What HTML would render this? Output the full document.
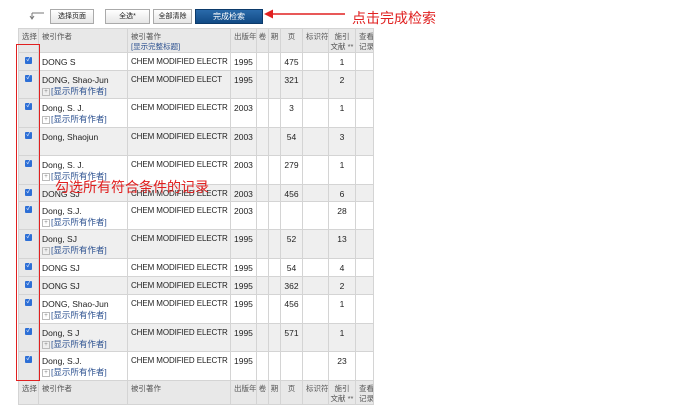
<html><head><style>
body{margin:0;width:700px;height:402px;background:#fff;font-family:"Liberation Sans","Noto Sans CJK SC",sans-serif;position:relative;overflow:hidden}
.btn{position:absolute;top:9px;height:13px;border:1px solid #aaa;background:linear-gradient(#fff,#e6e6e6);font-size:7px;text-align:center;line-height:13px;color:#222}
table{position:absolute;left:18px;top:28px;width:355px;border-collapse:collapse;font-size:8.5px;line-height:10px;color:#222;table-layout:fixed}
td{border:1px solid #d4d4d4;vertical-align:top;padding:4px 2px 0 3px;overflow:hidden;white-space:nowrap}
tr.h td{background:#e8e8e8;color:#555;font-size:7.5px;height:23px;padding-top:3px}
tr.g td{background:#efefef}
tr.w td{background:#fff}
td.c{text-align:center;padding-left:1px;padding-right:1px}
td.t{font-size:8px;letter-spacing:-0.1px}
td.s{background:#e8e8e8!important;text-align:center;padding:4px 0 0 0}
.sub{color:#2a4f8f;font-size:8.5px;margin-top:1px}
.sub b{display:inline-block;width:6px;height:6px;border:1px solid #bbb;font-size:6px;line-height:6px;color:#888;font-weight:normal;text-align:center;margin-right:1px;vertical-align:middle}
.cb{display:inline-block;width:7px;height:7px;background:#2d6fd6;border-radius:1px;color:#fff;font-size:6px;line-height:7px}
a{color:#2a4f8f;text-decoration:none}
</style></head><body>
<svg style="position:absolute;left:28px;top:10px" width="18" height="10"><path d="M4 3H16M4 3V8M2 6L4 9L6 6" stroke="#777" fill="none"/></svg>
<div class="btn" style="left:50px;width:42px">选择页面</div>
<div class="btn" style="left:105px;width:43px">全选*</div>
<div class="btn" style="left:153px;width:37px">全部清除</div>
<div class="btn" style="left:195px;width:66px;background:linear-gradient(#2a6aaa,#114a85);color:#fff;border-color:#0c3a6a;font-size:8px">完成检索</div>
<svg style="position:absolute;left:255px;top:6px" width="95" height="16"><path d="M90 8H16" stroke="#e02020" stroke-width="1.5"/><path d="M9 8L18 3.5V12.5Z" fill="#e02020"/></svg>
<div style="position:absolute;left:352px;top:8px;color:#e02020;font-size:14px">点击完成检索</div>
<table>
<colgroup><col style="width:20px"><col style="width:89px"><col style="width:103px"><col style="width:26px"><col style="width:12px"><col style="width:12px"><col style="width:22px"><col style="width:26px"><col style="width:27px"><col style="width:18px"></colgroup>
<tr class="h"><td>选择</td><td>被引作者</td><td>被引著作<br><a>[显示完整标题]</a></td><td>出版年</td><td class="c">卷</td><td class="c">期</td><td class="c">页</td><td>标识符</td><td class="c">施引<br>文献 **</td><td>查看<br>记录</td></tr>
<tr class="w" style="height:18px"><td class="s"><span class="cb">✓</span></td><td>DONG S</td><td class="t">CHEM MODIFIED ELECTR</td><td>1995</td><td></td><td></td><td class="c">475</td><td></td><td class="c">1</td><td></td></tr>
<tr class="g" style="height:28px"><td class="s"><span class="cb">✓</span></td><td>DONG, Shao-Jun<div class="sub"><b>+</b>[显示所有作者]</div></td><td class="t">CHEM MODIFIED ELECT</td><td>1995</td><td></td><td></td><td class="c">321</td><td></td><td class="c">2</td><td></td></tr>
<tr class="w" style="height:29px"><td class="s"><span class="cb">✓</span></td><td>Dong, S. J.<div class="sub"><b>+</b>[显示所有作者]</div></td><td class="t">CHEM MODIFIED ELECTR</td><td>2003</td><td></td><td></td><td class="c">3</td><td></td><td class="c">1</td><td></td></tr>
<tr class="g" style="height:28px"><td class="s"><span class="cb">✓</span></td><td>Dong, Shaojun</td><td class="t">CHEM MODIFIED ELECTR</td><td>2003</td><td></td><td></td><td class="c">54</td><td></td><td class="c">3</td><td></td></tr>
<tr class="w" style="height:29px"><td class="s"><span class="cb">✓</span></td><td>Dong, S. J.<div class="sub"><b>+</b>[显示所有作者]</div></td><td class="t">CHEM MODIFIED ELECTR</td><td>2003</td><td></td><td></td><td class="c">279</td><td></td><td class="c">1</td><td></td></tr>
<tr class="g" style="height:17px"><td class="s"><span class="cb">✓</span></td><td>DONG SJ</td><td class="t">CHEM MODIFIED ELECTR</td><td>2003</td><td></td><td></td><td class="c">456</td><td></td><td class="c">6</td><td></td></tr>
<tr class="w" style="height:28px"><td class="s"><span class="cb">✓</span></td><td>Dong, S.J.<div class="sub"><b>+</b>[显示所有作者]</div></td><td class="t">CHEM MODIFIED ELECTR</td><td>2003</td><td></td><td></td><td class="c"></td><td></td><td class="c">28</td><td></td></tr>
<tr class="g" style="height:29px"><td class="s"><span class="cb">✓</span></td><td>Dong, SJ<div class="sub"><b>+</b>[显示所有作者]</div></td><td class="t">CHEM MODIFIED ELECTR</td><td>1995</td><td></td><td></td><td class="c">52</td><td></td><td class="c">13</td><td></td></tr>
<tr class="w" style="height:18px"><td class="s"><span class="cb">✓</span></td><td>DONG SJ</td><td class="t">CHEM MODIFIED ELECTR</td><td>1995</td><td></td><td></td><td class="c">54</td><td></td><td class="c">4</td><td></td></tr>
<tr class="g" style="height:18px"><td class="s"><span class="cb">✓</span></td><td>DONG SJ</td><td class="t">CHEM MODIFIED ELECTR</td><td>1995</td><td></td><td></td><td class="c">362</td><td></td><td class="c">2</td><td></td></tr>
<tr class="w" style="height:29px"><td class="s"><span class="cb">✓</span></td><td>DONG, Shao-Jun<div class="sub"><b>+</b>[显示所有作者]</div></td><td class="t">CHEM MODIFIED ELECTR</td><td>1995</td><td></td><td></td><td class="c">456</td><td></td><td class="c">1</td><td></td></tr>
<tr class="g" style="height:28px"><td class="s"><span class="cb">✓</span></td><td>Dong, S J<div class="sub"><b>+</b>[显示所有作者]</div></td><td class="t">CHEM MODIFIED ELECTR</td><td>1995</td><td></td><td></td><td class="c">571</td><td></td><td class="c">1</td><td></td></tr>
<tr class="w" style="height:29px"><td class="s"><span class="cb">✓</span></td><td>Dong, S.J.<div class="sub"><b>+</b>[显示所有作者]</div></td><td class="t">CHEM MODIFIED ELECTR</td><td>1995</td><td></td><td></td><td class="c"></td><td></td><td class="c">23</td><td></td></tr>
<tr class="h"><td>选择</td><td>被引作者</td><td>被引著作</td><td>出版年</td><td class="c">卷</td><td class="c">期</td><td class="c">页</td><td>标识符</td><td class="c">施引<br>文献 **</td><td>查看<br>记录</td></tr>
</table>
<div style="position:absolute;left:16px;top:44px;width:22px;height:335px;border:1.5px solid #e02020"></div>
<div style="position:absolute;left:55px;top:177px;color:#e02020;font-size:14px">勾选所有符合条件的记录</div>
</body></html>
